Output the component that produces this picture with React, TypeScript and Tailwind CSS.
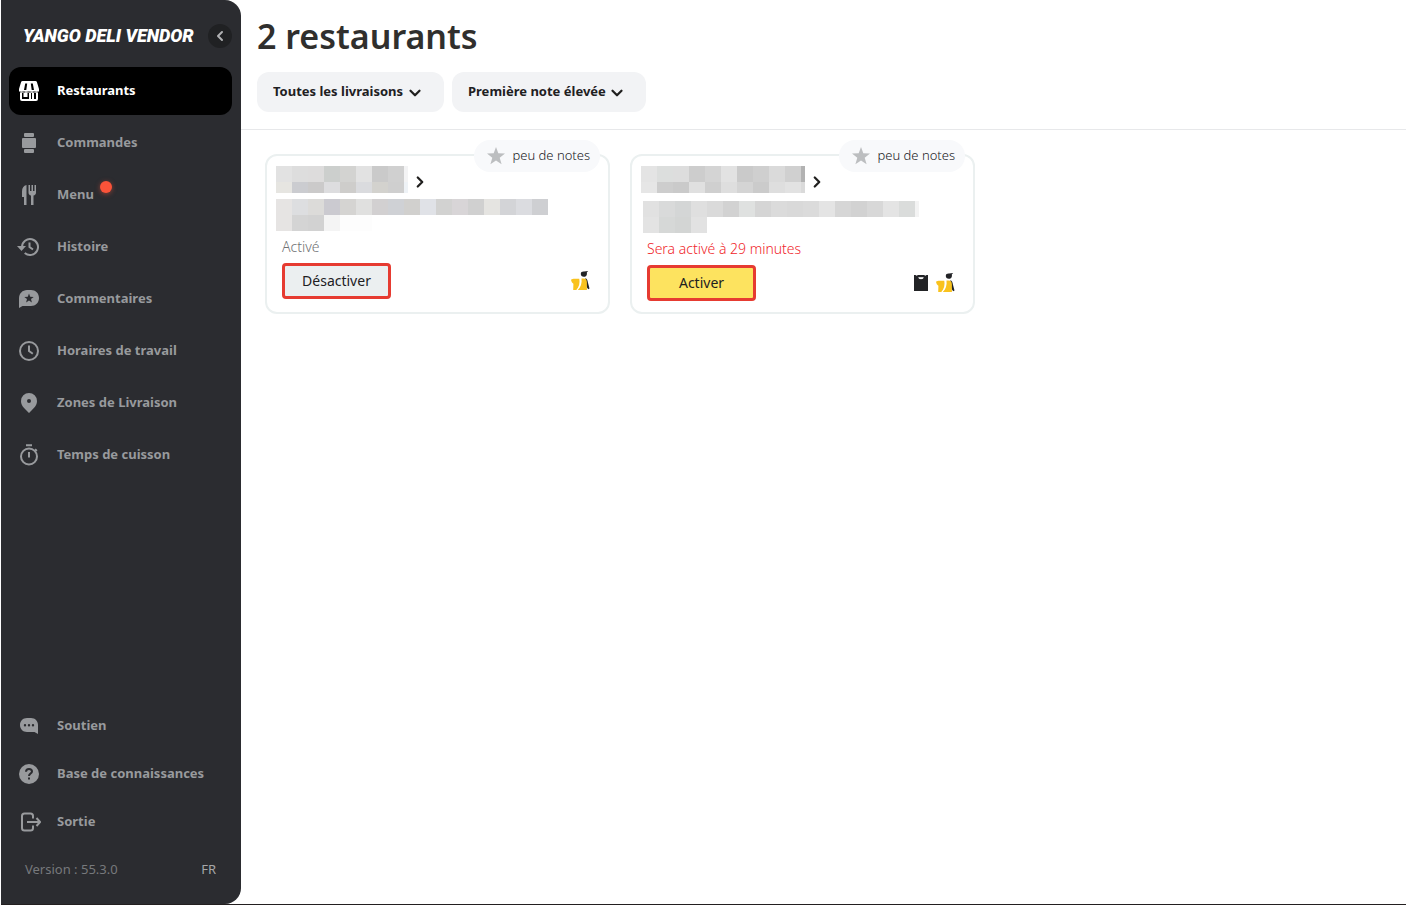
import type { ReactNode } from 'react';
import { ChevronDown, ChevronLeft, ChevronRight } from 'lucide-react';

type NavItem = { label: string; icon: ReactNode; active?: boolean; dot?: boolean };

type Strip = { x: number; y: number; h: number; cells: string[]; edge?: string };

type Restaurant = {
  name: { width: number; height: number; strips: Strip[] };
  address: { width: number; height: number; strips: Strip[] };
  status: string;
  paused: boolean;
  action: string;
  pickup: boolean;
};

function Icon({ children }: { children: ReactNode }) {
  return (
    <svg viewBox="0 0 24 24" fill="none" className="size-6 shrink-0" aria-hidden="true">
      {children}
    </svg>
  );
}

const storeIcon = (
  <Icon>
    <path
      fill="currentColor"
      fillRule="evenodd"
      d="M5.6 2h12.8c.8 0 1.300.4 1.500 1.100L22 10v2.500H2V10l2.100-6.900C4.300 2.400 4.800 2 5.600 2ZM8.200 4.500 7 11h2.300l.9-6.500h-2Zm5.600 0 .9 6.500H17l-1.200-6.500h-2Z"
    />
    <path
      fill="currentColor"
      fillRule="evenodd"
      d="M3 13.500h18V20a2 2 0 0 1-2 2H5a2 2 0 0 1-2-2v-6.500ZM5 14v6h7v-6h-1.500v4h-4v-4H5Zm9 0v6h1v-6h-1Zm3 0v6h2v-6h-2Z"
    />
    <path stroke="currentColor" d="M3.500 13h2M8 13h2.500M13.500 13H16M18.500 13h2" />
  </Icon>
);

const ordersIcon = (
  <Icon>
    <rect x="7" y="2" width="10" height="4" rx="1" fill="currentColor" />
    <rect x="5" y="7" width="14" height="10" rx="1" fill="currentColor" />
    <rect x="7" y="18" width="10" height="4" rx="1" fill="currentColor" />
    <path d="M6 6.500h12M6 17.500h12" stroke="#2b2c30" />
  </Icon>
);

const menuIcon = (
  <Icon>
    <path fill="currentColor" d="M9.500 2v20H7v-8H5V8.500C5 5 6.500 2.500 9.500 2Z" />
    <path
      fill="currentColor"
      d="M11.500 2H13v6h1.500V2H16v6h1.500V2H19v7.500c0 1.700-1 2.700-2.500 3V22H14v-9.500c-1.500-.3-2.500-1.300-2.500-3V2Z"
    />
  </Icon>
);

const historyIcon = (
  <Icon>
    <path d="M5 12a8 8 0 1 1 2.700 6" stroke="currentColor" strokeWidth="2" />
    <path fill="currentColor" d="M0 11h9l-4.500 5L0 11Z" />
    <path d="M12.500 7.500V12l3.500 2.500" stroke="currentColor" strokeWidth="2" />
  </Icon>
);

const reviewsIcon = (
  <Icon>
    <path
      fill="currentColor"
      fillRule="evenodd"
      d="M10 3h4c4.500 0 8 3.200 8 8s-3.500 8-8 8H5.500L2 21v-9.500C2 6.500 5.500 3 10 3Zm2 3.500-1.200 3.200-3.500.2 2.700 2.200-.9 3.400 2.900-1.900 2.900 1.900-.9-3.400 2.700-2.200-3.500-.2L12 6.500Z"
    />
  </Icon>
);

const clockIcon = (
  <Icon>
    <circle cx="12" cy="12" r="9" stroke="currentColor" strokeWidth="2" />
    <path d="M12 6.500V12l3.800 2.800" stroke="currentColor" strokeWidth="2" />
  </Icon>
);

const zonesIcon = (
  <Icon>
    <path
      fill="currentColor"
      fillRule="evenodd"
      d="M12 2a8 8 0 0 1 8 8c0 4.500-3 7-5.500 9.500L12 22l-2.500-2.500C7 17 4 14.500 4 10a8 8 0 0 1 8-8Zm0 6a2 2 0 1 0 0 4 2 2 0 0 0 0-4Z"
    />
  </Icon>
);

const timerIcon = (
  <Icon>
    <circle cx="12" cy="13.500" r="8" stroke="currentColor" strokeWidth="2" />
    <path d="M9 2.200h6M12 9v5.500M18 6.200l1.800 1.800" stroke="currentColor" strokeWidth="2" />
  </Icon>
);

const supportIcon = (
  <Icon>
    <path
      fill="currentColor"
      fillRule="evenodd"
      d="M10 4h4c4 0 7 2.800 7 7v9l-3.500-2H10c-4 0-7-2.800-7-7s3-7 7-7ZM8 10a1.200 1.200 0 1 0 0 2.400A1.200 1.200 0 0 0 8 10Zm4 0a1.200 1.200 0 1 0 0 2.400 1.200 1.200 0 0 0 0-2.400Zm4 0a1.200 1.200 0 1 0 0 2.400 1.200 1.200 0 0 0 0-2.400Z"
    />
  </Icon>
);

const helpIcon = (
  <Icon>
    <circle cx="12" cy="12" r="10" fill="currentColor" />
    <path
      d="M9 9.800C9 8 10.300 7 12 7s3 1 3 2.500c0 2-3 2.200-3 4.500"
      stroke="#2b2c30"
      strokeWidth="2"
    />
    <path fill="#2b2c30" d="M11 15.500h2v2h-2z" />
  </Icon>
);

const logoutIcon = (
  <Icon>
    <path
      d="M16 8.500V6a2.500 2.500 0 0 0-2.500-2.500h-6A2.500 2.500 0 0 0 5 6v12a2.500 2.500 0 0 0 2.500 2.500h6A2.500 2.500 0 0 0 16 18v-2.500M10 12h13M19.500 8l3.700 4-3.700 4"
      stroke="currentColor"
      strokeWidth="2"
    />
  </Icon>
);

const mainNav: NavItem[] = [
  { label: 'Restaurants', icon: storeIcon, active: true },
  { label: 'Commandes', icon: ordersIcon },
  { label: 'Menu', icon: menuIcon, dot: true },
  { label: 'Histoire', icon: historyIcon },
  { label: 'Commentaires', icon: reviewsIcon },
  { label: 'Horaires de travail', icon: clockIcon },
  { label: 'Zones de Livraison', icon: zonesIcon },
  { label: 'Temps de cuisson', icon: timerIcon },
];

const bottomNav: NavItem[] = [
  { label: 'Soutien', icon: supportIcon },
  { label: 'Base de connaissances', icon: helpIcon },
  { label: 'Sortie', icon: logoutIcon },
];

const restaurants: Restaurant[] = [
  {
    name: {
      width: 133,
      height: 27,
      strips: [
        {
          x: 0, y: 0, h: 16, edge: '#f3f3f4',
          cells: ['#e2e2e2', '#dddddd', '#dddcdc', '#cccfcd', '#d3d3d1', '#e2e2e2', '#cacaca', '#d0d0d0'],
        },
        {
          x: 0, y: 16, h: 11, edge: '#eef2f6',
          cells: ['#e6e5e1', '#cbccd0', '#cbcaca', '#dddddf', '#cecdcb', '#dadbde', '#d3d2ce', '#cfcfcf'],
        },
      ],
    },
    address: {
      width: 272,
      height: 32,
      strips: [
        {
          x: 0, y: 0, h: 16,
          cells: [
            '#e6e4e3', '#dddee0', '#dcdbd9', '#cbcad0', '#d5d4d2', '#e0e0df', '#d2d0d1', '#cfd1d5', '#d1d0ce',
            '#e0e2e7', '#d2d2d1', '#d8d5d7', '#d0d0d0', '#e5e4e1', '#d3d4d7', '#dbdce0', '#cecfd2',
          ],
        },
        {
          x: 0, y: 16, h: 16,
          cells: ['#e6e4e3', '#d4d4d4', '#d2d2d2', '#f4f4f4', '#fdfdfd', '#fdfdfd'],
        },
      ],
    },
    status: 'Activé',
    paused: false,
    action: 'Désactiver',
    pickup: false,
  },
  {
    name: {
      width: 165,
      height: 27,
      strips: [
        {
          x: 0, y: 0, h: 16, edge: '#b2b2b2',
          cells: ['#e4e4e4', '#dcdedd', '#dddddd', '#cdcdcd', '#d4d4d4', '#e2e2e2', '#cacaca', '#cfcfcf', '#dadada', '#d0d0d0'],
        },
        {
          x: 0, y: 16, h: 11, edge: '#dadada',
          cells: ['#e6e6e6', '#cdcdcd', '#cacaca', '#e0e0e0', '#cfcfcf', '#dedede', '#d4d4d4', '#cbcbcb', '#dedede', '#e2e2e2'],
        },
      ],
    },
    address: {
      width: 280,
      height: 34,
      strips: [
        {
          x: 2, y: 2, h: 16, edge: '#f3f3f3',
          cells: [
            '#e1e1e1', '#d9dada', '#d4d6d6', '#dfdfdf', '#dadada', '#d2d2d2', '#dfe1e0', '#d5d5d5', '#dbdbdb',
            '#d9d9d9', '#dbdbdb', '#e4e4e4', '#d6d6d6', '#d2d2d2', '#d8d8d8', '#e4e4e4', '#dadcdb',
          ],
        },
        { x: 2, y: 18, h: 16, cells: ['#e3e3e3', '#d6d8d7', '#d3d5d4', '#e2e2e2'] },
      ],
    },
    status: 'Sera activé à 29 minutes',
    paused: true,
    action: 'Activer',
    pickup: true,
  },
];

// Private details are shown as a mosaic of 16px cells
function Mosaic({ width, height, strips }: Restaurant['name']) {
  return (
    <svg width={width} height={height} shapeRendering="crispEdges" className="block" aria-hidden="true">
      {strips.map((s) => (
        <g key={s.y}>
          {s.cells.map((color, i) => (
            <rect key={i} x={s.x + i * 16} y={s.y} width="16" height={s.h} fill={color} />
          ))}
          {s.edge && <rect x={s.x + s.cells.length * 16} y={s.y} width="4" height={s.h} fill={s.edge} />}
        </g>
      ))}
    </svg>
  );
}

function CourierIcon() {
  return (
    <svg viewBox="0 0 20 20" className="size-5" aria-label="Livraison par coursier">
      <path fill="#222326" d="M9.800 3C9.800 1.200 11.200.4 13 .6L17.200 0l-1.400 1.400c.5 2.200-.3 4.300-3 4.300-1.900 0-3-1.200-3-2.700Z" />
      <path fill="#222326" d="M14.300 7.300c1.800.4 2.300 2.200 2.600 4.200l1.600 6-1.300.8-1.700-2.500-1.200-4V7.300Z" />
      <path fill="#f9c21d" d="M0 8.800c1-.9 2.300-1 3.500-1H8.300c.7 4-.1 8.200-3 11.200H2.200l.2-6.200C1.200 12 .3 10.800 0 8.800Z" />
      <path fill="#f9c21d" d="M10.500 7.500h2c2.400 0 3.400 1.500 3.400 4V19H6.800c3-2.500 4.300-7 3.700-11.500Z" />
    </svg>
  );
}

function PickupIcon() {
  return (
    <svg viewBox="0 0 14 16" className="h-4 w-3.5" aria-label="À emporter">
      <path fill="#222326" d="M0 0h1.500l1 .8L4 0h6l1.500.8 1-.8H14v16H0V0Z" />
      <path d="M4.700 2.800c.5 1.200 4.100 1.200 4.600 0Z" fill="#fff" stroke="#fff" />
    </svg>
  );
}

function StarIcon() {
  return (
    <svg viewBox="0 0 20 20" className="size-5" aria-hidden="true">
      <path fill="#bcbec0" d="m10 1 2.300 6.300 6.700.2-5.300 4.200 1.900 6.600-5.600-3.900-5.600 3.900 1.900-6.600L1 7.500l6.700-.2L10 1Z" />
    </svg>
  );
}

function NavLink({ item }: { item: NavItem }) {
  return (
    <a
      href="#"
      className={`flex h-12 items-center gap-4 rounded-xl px-2 text-[13px] font-bold ${
        item.active ? 'bg-black text-white' : 'text-[#989a9d]'
      }`}
    >
      {item.icon}
      <span className="relative">
        {item.label}
        {item.dot && (
          <span className="absolute -right-4.5 -top-1 size-3 rounded-full bg-[#fa5339] shadow-[0_1px_5px_#fa533980]" />
        )}
      </span>
    </a>
  );
}

function Sidebar() {
  return (
    <aside className="flex w-60 shrink-0 flex-col rounded-r-2xl bg-[#2b2c30] pl-2 pr-[9px]">
      <div className="flex h-[67px] items-center justify-between pl-3.5 pt-1">
        <span className="whitespace-nowrap font-[Roboto,sans-serif] text-lg font-black italic text-white">
          YANGO DELI VENDOR
        </span>
        <button
          type="button"
          aria-label="Réduire le menu"
          className="flex size-6 items-center justify-center rounded-full bg-[#202123] text-[#b0b1b3]"
        >
          <ChevronLeft size={16} strokeWidth={3} />
        </button>
      </div>
      <nav className="flex flex-col gap-1">
        {mainNav.map((item) => (
          <NavLink key={item.label} item={item} />
        ))}
      </nav>
      <nav className="mt-auto flex flex-col">
        {bottomNav.map((item) => (
          <NavLink key={item.label} item={item} />
        ))}
      </nav>
      <div className="flex h-[58px] items-center justify-between px-4 pb-2.5 text-[13px]">
        <span className="text-[#77797c]">Version : 55.3.0</span>
        <button type="button" className="text-[#a5a6a8]">
          FR
        </button>
      </div>
    </aside>
  );
}

function Filter({ label, option }: { label: string; option: string }) {
  return (
    <div className="relative">
      <select
        aria-label={label}
        className="h-10 appearance-none rounded-xl bg-[#f2f3f5] pl-4 pr-10 text-[13px] font-bold text-[#21201f]"
      >
        <option>{option}</option>
      </select>
      <ChevronDown
        size={18}
        strokeWidth={3}
        className="pointer-events-none absolute right-5 top-3 text-[#21201f]"
      />
    </div>
  );
}

function RestaurantCard({ item }: { item: Restaurant }) {
  return (
    <article className="relative h-40 rounded-xl border-2 border-[#ebf0f0] px-[9px] pt-2.5">
      <div className="absolute -top-4 right-2 flex h-8 items-center gap-1.5 rounded-full bg-[#f8f9fb] pl-3 pr-2.5 text-[13px] font-light text-[#21201f]">
        <StarIcon />
        peu de notes
      </div>
      <a href="#" aria-label="Ouvrir le restaurant" className="flex items-center gap-0.5">
        <Mosaic {...item.name} />
        <ChevronRight size={18} strokeWidth={3} className="mt-1 text-[#21201f]" />
      </a>
      <div className="pt-1.5">
        <Mosaic {...item.address} />
      </div>
      <p
        className={`px-1.5 pt-1.5 text-sm font-light leading-5 ${
          item.paused ? 'text-[#f0252a]' : 'text-[#707174]'
        }`}
      >
        {item.status}
      </p>
      <div className="flex items-center justify-between px-1.5 pt-1.5">
        <button
          type="button"
          className={`h-9 w-[109px] rounded border-3 border-[#e63b31] text-sm text-[#21201f] ${
            item.paused ? 'bg-[#fde35f]' : 'bg-[#ebeff0]'
          }`}
        >
          {item.action}
        </button>
        <div className="flex items-center gap-2 pr-0.5">
          {item.pickup && <PickupIcon />}
          <CourierIcon />
        </div>
      </div>
    </article>
  );
}

export default function App() {
  return (
    <div className="ml-px mr-[7px] flex min-h-screen border-b border-[#231f20] bg-white font-['Noto_Sans',sans-serif]">
      <Sidebar />
      <main className="flex-1">
        <header className="border-b border-[#e7e8ea] px-4 pb-[17px] pt-4">
          <h1 className="text-[34px] font-semibold leading-10 text-[#302f2d]">2 restaurants</h1>
          <div className="flex gap-2 pt-4">
            <Filter label="Livraisons" option="Toutes les livraisons" />
            <Filter label="Tri" option="Première note élevée" />
          </div>
        </header>
        <section className="grid grid-cols-[repeat(auto-fill,345px)] gap-5 p-6">
          {restaurants.map((item) => (
            <RestaurantCard key={item.action} item={item} />
          ))}
        </section>
      </main>
    </div>
  );
}
